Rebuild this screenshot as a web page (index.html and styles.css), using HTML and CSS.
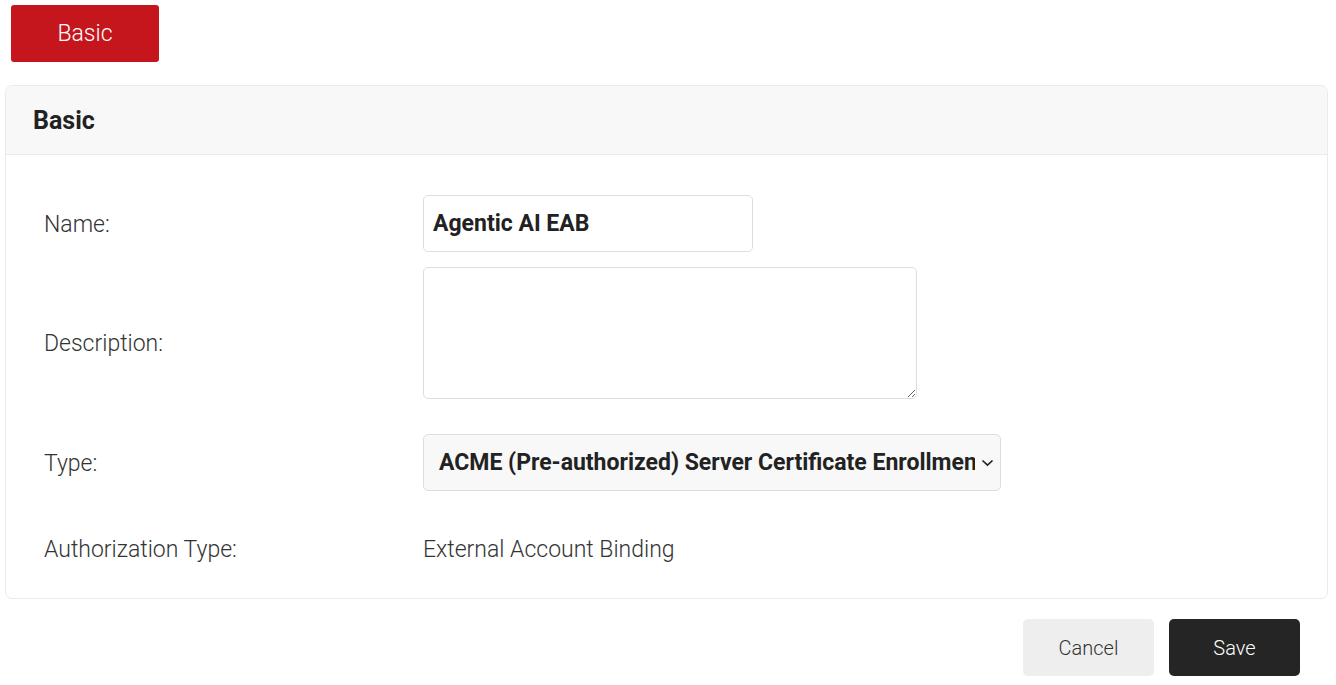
FILE: index.html
```html
<!DOCTYPE html>
<html lang="en">
<head>
    <meta charset="UTF-8">
    <title>Basic</title>
    <link rel="stylesheet" href="styles.css">
</head>
<body>

<div class="tabs">
    <button class="tab active">Basic</button>
</div>

<div class="panel">
    <div class="panel-heading">
        <h3>Basic</h3>
    </div>

    <div class="panel-body">
        <div class="form-row">
            <label for="name">Name:</label>
            <div>
                <input type="text" id="name" class="name-input" value="Agentic AI EAB">
            </div>
        </div>

        <div class="form-row">
            <label for="description">Description:</label>
            <div>
                <textarea id="description" class="desc-input"></textarea>
            </div>
        </div>

        <div class="form-row">
            <label for="type">Type:</label>
            <div class="select-wrap">
                <select id="type" class="type-select">
                    <option>ACME (Pre-authorized) Server Certificate Enrollment</option>
                </select>
                <svg class="chevron" width="13" height="8" viewBox="0 0 13 8">
                    <path d="M1.5 1.5 L6.5 6.2 L11.5 1.5" fill="none" stroke="#222" stroke-width="1.7"/>
                </svg>
            </div>
        </div>

        <div class="form-row static-row">
            <label>Authorization Type:</label>
            <div class="static-value">External Account Binding</div>
        </div>
    </div>
</div>

<div class="actions">
    <button class="btn btn-cancel">Cancel</button>
    <button class="btn btn-save">Save</button>
</div>

</body>
</html>
```

FILE: styles.css
```css
* {
    box-sizing: border-box;
    font-family: Roboto, "Liberation Sans", sans-serif;
}

body {
    margin: 0;
    padding: 5px 8px 0 5px;
    background: #fff;
    color: #333;
}

.tabs {
    padding-left: 6px;
    margin-bottom: 23px;
}

.tab {
    width: 148px;
    height: 57px;
    border: none;
    border-radius: 3px;
    font-size: 23px;
    font-weight: 300;
    color: #fff;
    cursor: pointer;
}

.tab.active {
    background-color: #c4161c;
}

.panel {
    border: 1px solid #ebebeb;
    border-radius: 7px;
    overflow: hidden;
}

.panel-heading {
    height: 69px;
    background-color: #f8f8f8;
    border-bottom: 1px solid #ebebeb;
    display: flex;
    align-items: center;
    padding-left: 27px;
}

.panel-heading h3 {
    margin: 0;
    font-size: 25px;
    font-weight: 700;
    color: #222;
}

.panel-body {
    padding: 40px 38px 35px;
}

.form-row {
    display: grid;
    grid-template-columns: 379px 1fr;
    align-items: center;
    margin-bottom: 15px;
}

.form-row label {
    font-size: 23px;
    font-weight: 300;
    color: #333;
    line-height: 26px;
    padding-top: 2px;
}

.name-input {
    display: block;
    width: 330px;
    height: 57px;
    padding: 0 9px;
    border: 1px solid #dedede;
    border-radius: 5px;
    font-size: 23px;
    font-weight: 700;
    color: #222;
    outline: none;
}

.desc-input {
    display: block;
    width: 494px;
    height: 132px;
    margin-bottom: 20px;
    border: 1px solid #dedede;
    border-radius: 5px;
    font-size: 20px;
    padding: 8px;
    outline: none;
}

.select-wrap {
    position: relative;
    width: 578px;
}

.type-select {
    display: block;
    width: 100%;
    height: 57px;
    padding: 0 25px 0 15px;
    border: 1px solid #dedede;
    border-radius: 5px;
    background-color: #f8f8f8;
    font-size: 23px;
    font-weight: 700;
    color: #222;
    appearance: none;
    -webkit-appearance: none;
    outline: none;
}

.chevron {
    position: absolute;
    right: 7px;
    top: 25px;
    pointer-events: none;
}

.static-row {
    margin-top: 44px;
    margin-bottom: 0;
}

.static-value {
    font-size: 23px;
    font-weight: 300;
    line-height: 26px;
    padding-top: 2px;
    color: #333;
}

.actions {
    display: flex;
    justify-content: flex-end;
    gap: 15px;
    padding: 20px 28px 0 0;
}

.btn {
    width: 131px;
    height: 57px;
    border: none;
    border-radius: 5px;
    font-size: 20px;
    font-weight: 300;
    cursor: pointer;
}

.btn-cancel {
    background-color: #eeeeee;
    color: #333;
}

.btn-save {
    background-color: #252525;
    color: #fff;
}
```
